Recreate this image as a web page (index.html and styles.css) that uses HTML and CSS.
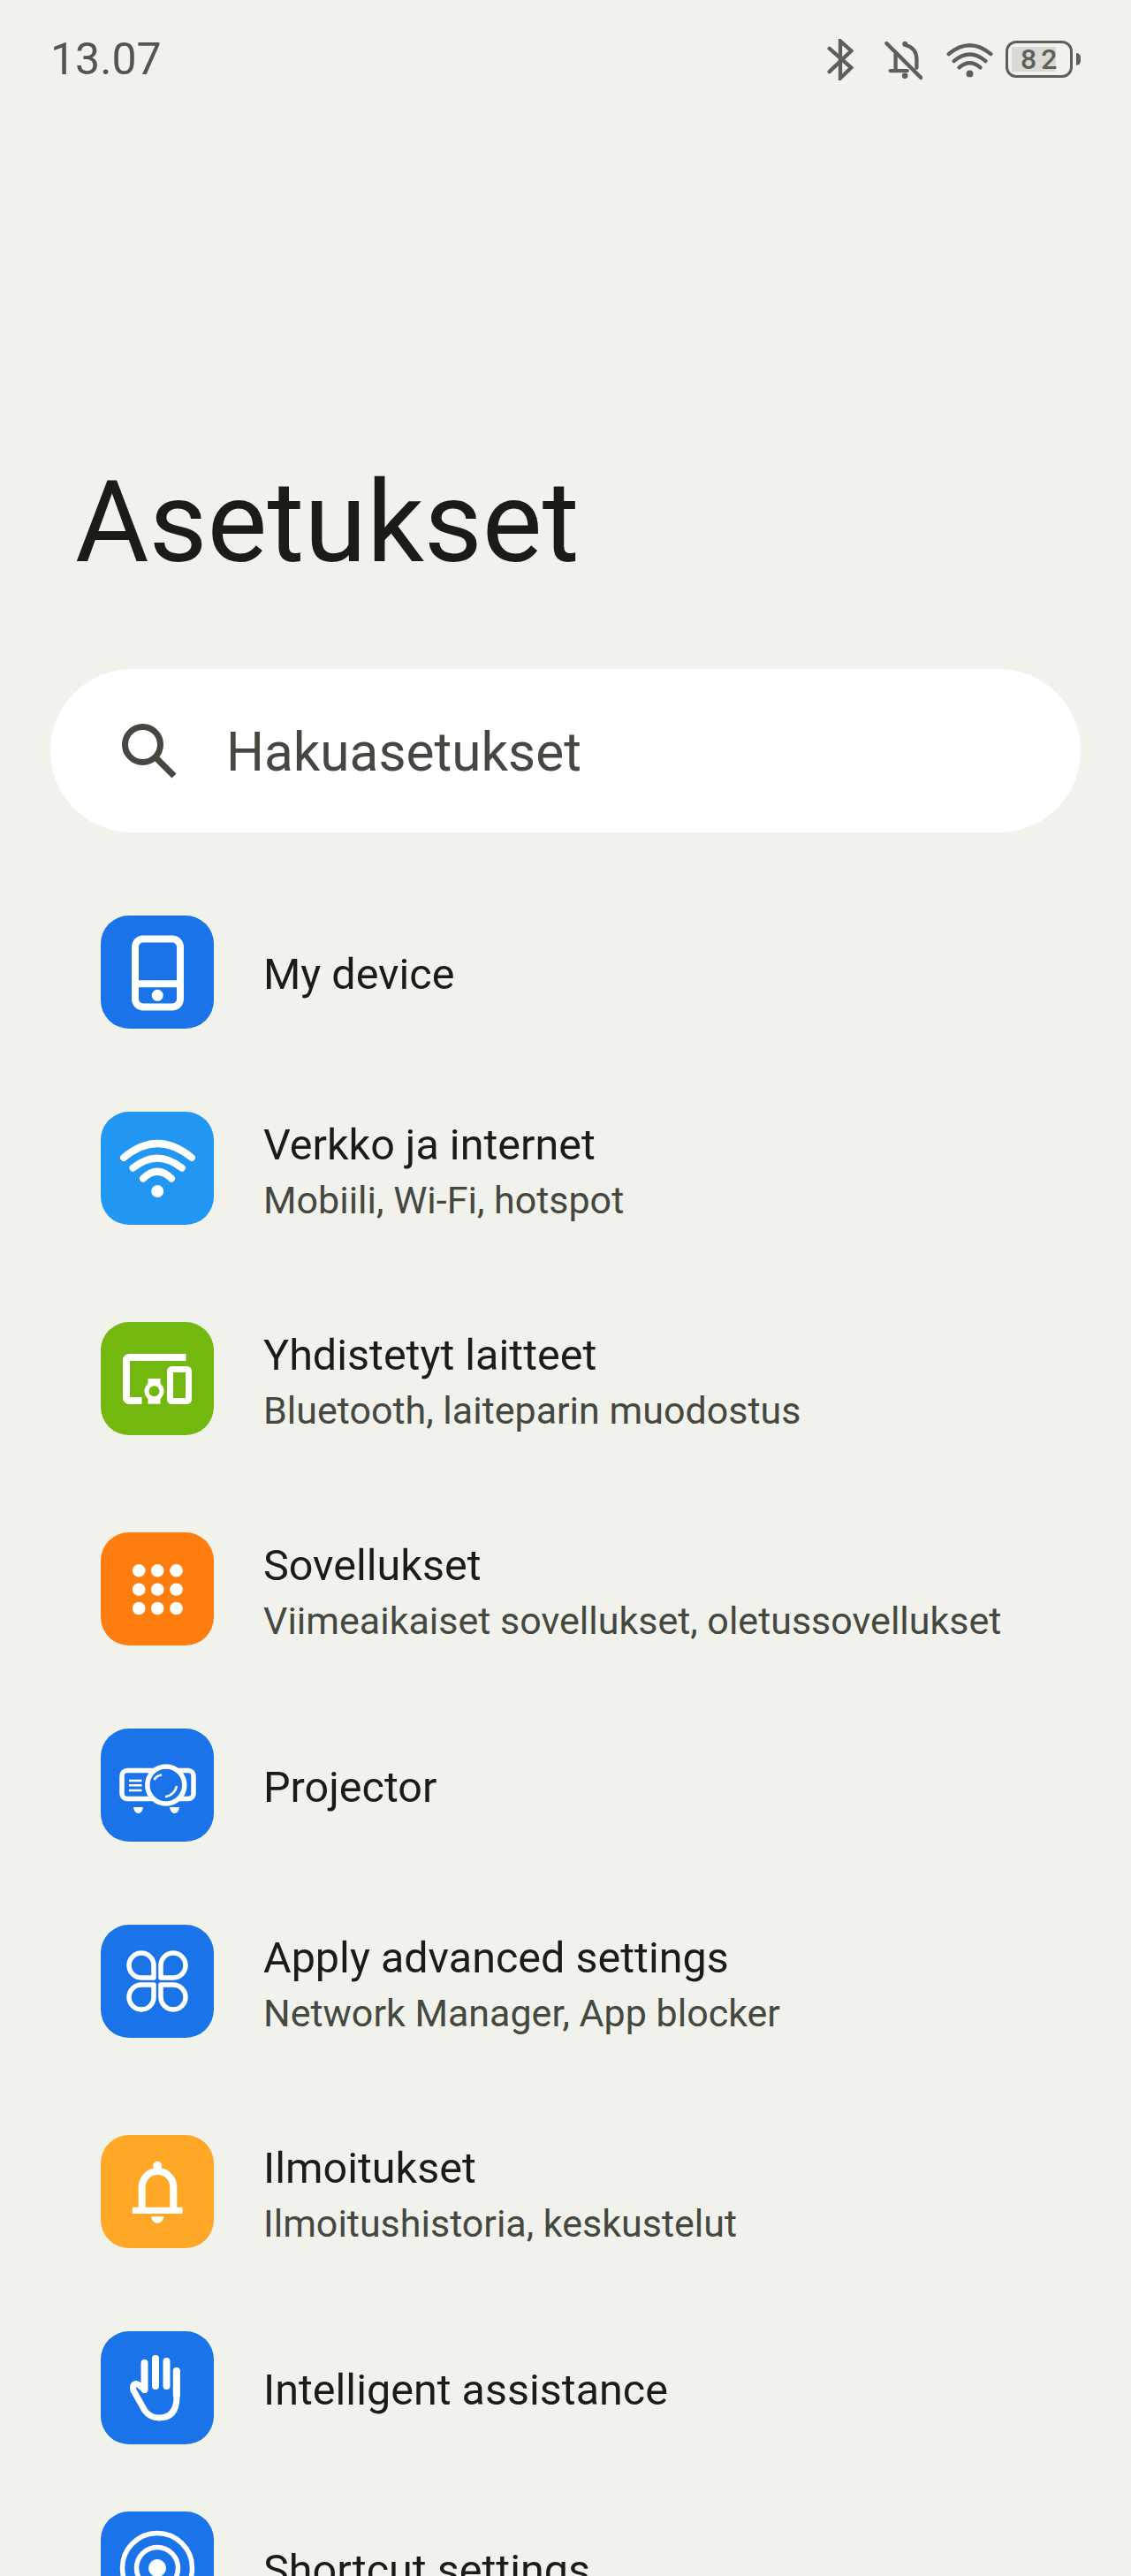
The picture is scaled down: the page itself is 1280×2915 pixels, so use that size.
FILE: index.html
```html
<!DOCTYPE html>
<html lang="fi">
<head>
    <meta charset="UTF-8">
    <meta name="viewport" content="width=device-width, initial-scale=1.0">
    <title>Asetukset</title>
    <link rel="stylesheet" href="styles.css">
</head>
<body>
    <div class="status-bar">
        <span class="time">13.07</span>
        <div class="status-icons">
            <svg class="st-bt" viewBox="0 0 90 140"><path d="M8 32 L82 97 L45 133 V7 L82 40 L8 111"/></svg>
            <svg class="st-bell" viewBox="0 0 130 140">
                <path d="M38 52 V108 M20 108 H78 M110 98 V68 Q110 30 72 20 M7 14 L125 132"/>
                <circle class="fill" cx="70" cy="16" r="9"/>
                <circle class="fill" cx="70" cy="125" r="10"/>
            </svg>
            <svg class="st-wifi" viewBox="0 0 160 130">
                <path d="M8 46 Q80 -14 152 46 M26 70 Q80 24 134 70 M44 92 Q80 60 116 92"/>
                <circle class="fill" cx="80" cy="113" r="12"/>
            </svg>
            <div class="battery">
                <div class="battery-body"><span class="battery-level">82</span></div>
                <div class="battery-tip"></div>
            </div>
        </div>
    </div>

    <h1 class="page-title">Asetukset</h1>

    <div class="search-box">
        <svg class="search-icon" viewBox="0 0 64 64"><circle cx="24.5" cy="24.5" r="20"/><path d="M39 39 L60 60"/></svg>
        <span class="search-text">Hakuasetukset</span>
    </div>

    <div class="settings-list">
        <div class="row">
            <div class="app-icon blue">
                <svg viewBox="0 0 128 128">
                    <rect x="39" y="26.5" width="51" height="77" rx="9"/>
                    <path d="M39 77.3 H90"/>
                    <circle class="fill" cx="64.2" cy="90.3" r="6.5"/>
                </svg>
            </div>
            <div class="row-text"><div class="row-title">My device</div></div>
        </div>

        <div class="row two-line tall">
            <div class="app-icon sky">
                <svg viewBox="0 0 128 128">
                    <path d="M26 52 Q64 20 103 52 M36.5 63.7 Q64 41.7 91.8 63.7 M48 75.7 Q64 60 80 75.7"/>
                    <circle class="fill" cx="64.2" cy="90" r="7"/>
                </svg>
            </div>
            <div class="row-text">
                <div class="row-title">Verkko ja internet</div>
                <div class="row-sub">Mobiili, Wi-Fi, hotspot</div>
            </div>
        </div>

        <div class="row two-line tall">
            <div class="app-icon green">
                <svg viewBox="0 0 128 128">
                    <path d="M96.5 40 H33 Q29 40 29 44 V85 Q29 89 33 89 H46.5"/>
                    <rect class="thin" x="78.5" y="53.5" width="21" height="36" rx="2"/>
                    <rect class="fill" x="53.5" y="64" width="14" height="28.7"/>
                    <circle class="fill" cx="60.5" cy="78.3" r="11"/>
                    <circle class="hole" cx="60.5" cy="78.3" r="6"/>
                </svg>
            </div>
            <div class="row-text">
                <div class="row-title">Yhdistetyt laitteet</div>
                <div class="row-sub">Bluetooth, laiteparin muodostus</div>
            </div>
        </div>

        <div class="row two-line">
            <div class="app-icon orange">
                <svg viewBox="0 0 128 128">
                    <circle class="fill" cx="43.2" cy="43.3" r="7.3"/>
                    <circle class="fill" cx="64.2" cy="43.3" r="7.3"/>
                    <circle class="fill" cx="85.5" cy="43.3" r="7.3"/>
                    <circle class="fill" cx="43.2" cy="64.7" r="7.3"/>
                    <circle class="fill" cx="64.2" cy="64.7" r="7.3"/>
                    <circle class="fill" cx="85.5" cy="64.7" r="7.3"/>
                    <circle class="fill" cx="43.2" cy="86" r="7.3"/>
                    <circle class="fill" cx="64.2" cy="86" r="7.3"/>
                    <circle class="fill" cx="85.5" cy="86" r="7.3"/>
                </svg>
            </div>
            <div class="row-text">
                <div class="row-title">Sovellukset</div>
                <div class="row-sub">Viimeaikaiset sovellukset, oletussovellukset</div>
            </div>
        </div>

        <div class="row">
            <div class="app-icon blue">
                <svg viewBox="0 0 128 128">
                    <rect class="mid" x="24" y="47.5" width="81" height="32" rx="6"/>
                    <circle class="mid lens" cx="73.8" cy="64" r="21"/>
                    <path class="hair" d="M32 59 H46.5 M32 64.3 H46.5 M32 70 H46.5 M60.5 58 Q63 53.5 69 52.3 M73 77.3 Q84 75 86 65"/>
                    <path class="fill" d="M37 89 H48 Q47 96 42.5 96 Q38 96 37 89 Z M78 89 H89 Q88 96 83.5 96 Q79 96 78 89 Z"/>
                </svg>
            </div>
            <div class="row-text"><div class="row-title">Projector</div></div>
        </div>

        <div class="row two-line tall">
            <div class="app-icon blue">
                <svg viewBox="0 0 128 128">
                    <path class="mid" d="M60 60 H46 A14 14 0 1 1 60 46 Z M68 60 H82 A14 14 0 1 0 68 46 Z M60 68 H46 A14 14 0 1 0 60 82 Z M68 68 H82 A14 14 0 1 1 68 82 Z"/>
                </svg>
            </div>
            <div class="row-text">
                <div class="row-title">Apply advanced settings</div>
                <div class="row-sub">Network Manager, App blocker</div>
            </div>
        </div>

        <div class="row two-line">
            <div class="app-icon amber">
                <svg viewBox="0 0 128 128">
                    <path d="M46.7 82 V58.8 A17.8 17.8 0 0 1 82.3 58.8 V82"/>
                    <rect class="fill" x="35.8" y="81.7" width="56.7" height="7.3"/>
                    <circle class="fill" cx="64.2" cy="34.7" r="5"/>
                    <path class="fill" d="M57 92.3 H71.5 Q70 99.7 64.2 99.7 Q58.5 99.7 57 92.3 Z"/>
                </svg>
            </div>
            <div class="row-text">
                <div class="row-title">Ilmoitukset</div>
                <div class="row-sub">Ilmoitushistoria, keskustelut</div>
            </div>
        </div>

        <div class="row short">
            <div class="app-icon blue">
                <svg viewBox="0 0 128 128">
                    <path class="round" d="M49.5 36 V66 M62 31 V62 M74.5 34 V62 M85.8 45 V72"/>
                    <path class="round thin" d="M49.5 66 L42 60 Q35 58 37 67 L50 90 Q56 98 66 98 Q86 98 86 74 V45"/>
                </svg>
            </div>
            <div class="row-text"><div class="row-title">Intelligent assistance</div></div>
        </div>

        <div class="row">
            <div class="app-icon blue">
                <svg viewBox="0 0 128 128">
                    <circle class="mid" cx="64" cy="64" r="39.5"/>
                    <circle class="mid" cx="64" cy="64" r="23.5"/>
                    <circle class="fill" cx="64" cy="64" r="10"/>
                </svg>
            </div>
            <div class="row-text"><div class="row-title">Shortcut settings</div></div>
        </div>
    </div>
</body>
</html>
```

FILE: styles.css
```css
html, body {
    margin: 0;
    height: 2915px;
    overflow: hidden;
}
body {
    background-color: #f1f2ec;
    color: #1b1c18;
    font-family: 'Roboto', sans-serif;
}
svg {
    display: block;
    fill: none;
}

/* status bar */
.status-bar {
    display: flex;
    align-items: center;
    justify-content: space-between;
    height: 134px;
    padding: 0 57px;
}
.time {
    font-size: 50px;
    color: #555550;
}
.status-icons {
    display: flex;
    align-items: center;
}
.status-icons svg {
    stroke: #5f5f5a;
    stroke-width: 13;
    stroke-linecap: round;
}
.status-icons svg .fill {
    fill: #5f5f5a;
    stroke: none;
}
.st-bt {
    width: 30px;
    height: 47px;
    margin-right: 35px;
}
.st-bell {
    width: 43px;
    height: 47px;
    margin-right: 27px;
}
.st-wifi {
    width: 53px;
    height: 43px;
    margin-right: 14px;
}
.battery {
    display: flex;
    align-items: center;
}
.battery-body {
    box-sizing: border-box;
    width: 76px;
    height: 42px;
    padding: 4px;
    border: 3px solid #5f5f5a;
    border-radius: 12px;
}
.battery-level {
    display: block;
    box-sizing: border-box;
    width: 50px;
    height: 28px;
    padding-left: 10px;
    background-color: #d9dad5;
    color: #5f5f5a;
    font-size: 32px;
    font-weight: 500;
    line-height: 29px;
    letter-spacing: 5px;
    white-space: nowrap;
}
.battery-tip {
    width: 5px;
    height: 14px;
    margin-left: 4px;
    background-color: #5f5f5a;
    border-radius: 0 5px 5px 0;
}

/* title + search */
.page-title {
    margin: 0;
    padding: 382px 0 0 85px;
    height: 241px;
    font-size: 128px;
    font-weight: 400;
    line-height: 150px;
}
.search-box {
    display: flex;
    align-items: center;
    box-sizing: border-box;
    height: 185px;
    margin: 0 57px 47px;
    padding-left: 80px;
    background-color: #ffffff;
    border-radius: 93px;
}
.search-icon {
    width: 64px;
    height: 64px;
    stroke: #444840;
    stroke-width: 7;
}
.search-text {
    margin: 3px 0 0 55px;
    font-size: 60.3px;
    color: #444840;
}

/* settings rows */
.row {
    display: flex;
    align-items: flex-start;
    box-sizing: border-box;
    height: 222px;
    padding: 47px 0 0 114px;
}
.row.tall {
    height: 238px;
}
.row.short {
    height: 204px;
}
.app-icon {
    flex: none;
    width: 128px;
    height: 128px;
    border-radius: 32px;
}
.app-icon svg {
    stroke: #ffffff;
    stroke-width: 8;
}
.app-icon svg .fill {
    fill: #ffffff;
    stroke: none;
}
.app-icon svg .thin {
    stroke-width: 7;
}
.app-icon svg .mid {
    stroke-width: 5.5;
    stroke-linejoin: round;
}
.app-icon svg .hair {
    stroke-width: 2.6;
}
.app-icon svg .round {
    stroke-linecap: round;
    stroke-linejoin: round;
}
.app-icon.blue { background-color: #1a73e8; }
.app-icon.sky { background-color: #2196f3; }
.app-icon.green { background-color: #72b80f; }
.app-icon.orange { background-color: #ff7d0f; }
.app-icon.amber { background-color: #ffa726; }
.green .hole { fill: #72b80f; stroke: none; }
.blue .lens { fill: #1a73e8; }
.sky svg path { stroke-linecap: round; }

.row-text {
    margin: 35px 0 0 56px;
}
.two-line .row-text {
    margin-top: 6px;
}
.row-title {
    font-size: 48.5px;
    line-height: 64px;
}
.row-sub {
    font-size: 43px;
    line-height: 60px;
    color: #444840;
}
```
